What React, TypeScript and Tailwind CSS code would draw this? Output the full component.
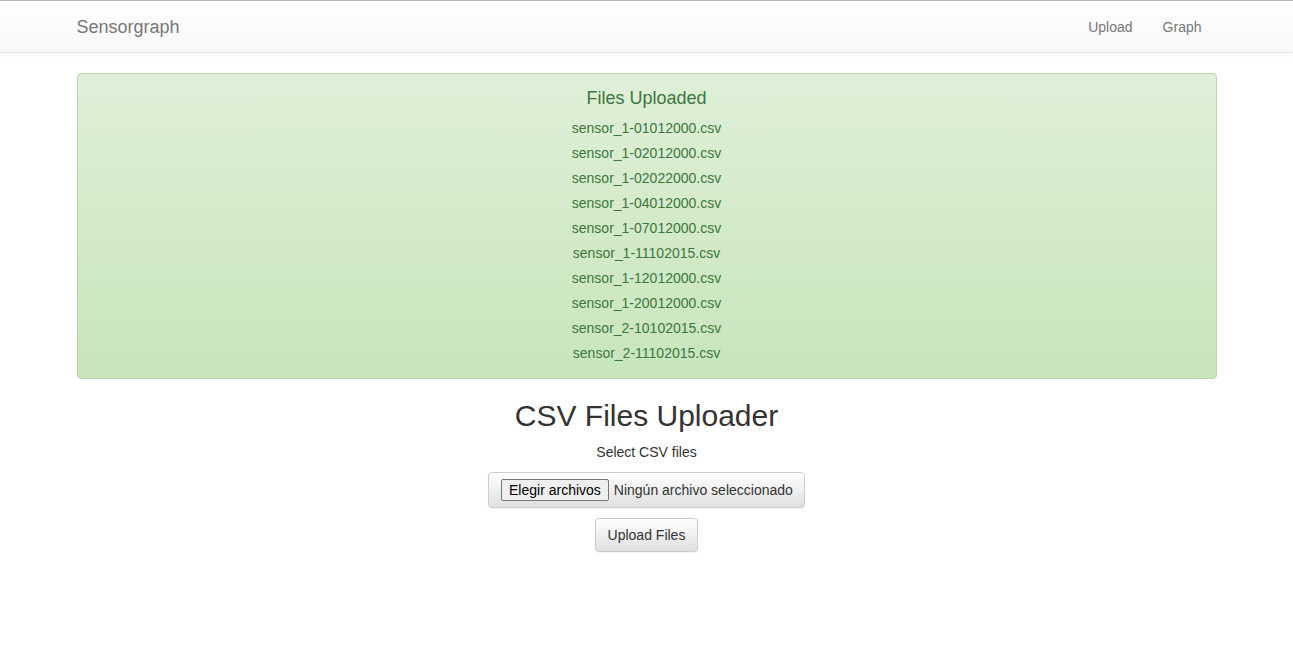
import React from "react";

const files = [
    "sensor_1-01012000.csv",
    "sensor_1-02012000.csv",
    "sensor_1-02022000.csv",
    "sensor_1-04012000.csv",
    "sensor_1-07012000.csv",
    "sensor_1-11102015.csv",
    "sensor_1-12012000.csv",
    "sensor_1-20012000.csv",
    "sensor_2-10102015.csv",
    "sensor_2-11102015.csv",
];

const App: React.FC = () => {
    return (
        <div className="min-h-[653px] bg-white text-[14px] text-[#333] font-['Liberation_Sans',Arial,sans-serif]">
            {/* Navbar */}
            <nav className="border-t border-t-[#b5b5b5] border-b border-b-[#e7e7e7] bg-gradient-to-b from-white to-[#f8f8f8] shadow-[0_1px_4px_rgba(0,0,0,0.06)]">
                <div className="mx-auto flex h-[51px] w-[1140px] items-center justify-between pt-[2px]">
                    <span className="text-[18px] text-[#777]">Sensorgraph</span>
                    <ul className="flex">
                        <li className="px-[15px] text-[#777]">Upload</li>
                        <li className="pl-[15px] pr-[15px] text-[#777]">Graph</li>
                    </ul>
                </div>
            </nav>

            <div className="mx-auto w-[1140px] pt-[20px]">
                {/* Success alert */}
                <div className="rounded-[4px] border border-[#b2dba1] bg-gradient-to-b from-[#dff0d8] to-[#c8e5bc] px-[15px] pt-[14px] pb-[12px] text-center text-[#3c763d]">
                    <h4 className="h-[20px] text-[18px] leading-[20px] mb-[8px]">Files Uploaded</h4>
                    <ul>
                        {files.map((f) => (
                            <li key={f} className="leading-[25px]">{f}</li>
                        ))}
                    </ul>
                </div>

                {/* Uploader */}
                <div className="flex flex-col items-center">
                    <h1 className="mt-[17px] h-[40px] text-[30px] leading-[40px] text-[#333]">CSV Files Uploader</h1>
                    <p className="mt-[6px] leading-[20px]">Select CSV files</p>
                    <label className="mt-[10px] flex h-[36px] w-[317px] items-center rounded-[4px] border border-[#ccc] bg-gradient-to-b from-white to-[#e0e0e0] pl-[12px] shadow-[0_1px_1px_rgba(0,0,0,0.05)]">
                        <span className="flex h-[22px] items-center rounded-[2px] border border-[#767676] bg-[#efefef] px-[7px] text-black">Elegir archivos</span>
                        <span className="ml-[5px] text-[#333]">Ningún archivo seleccionado</span>
                    </label>
                    <button className="mt-[10px] h-[34px] w-[103px] rounded-[4px] border border-[#ccc] bg-gradient-to-b from-white to-[#e0e0e0] text-[#333] shadow-[0_1px_1px_rgba(0,0,0,0.05)]">
                        Upload Files
                    </button>
                </div>
            </div>
        </div>
    );
};

export default App;
